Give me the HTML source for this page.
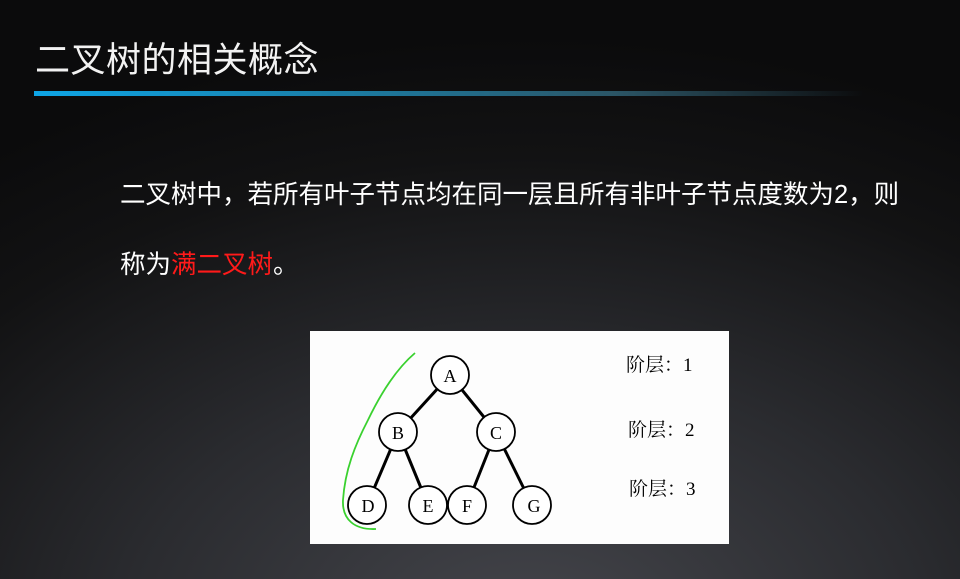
<!DOCTYPE html>
<html><head><meta charset="utf-8"><style>
html,body{margin:0;padding:0}
body{width:960px;height:579px;overflow:hidden;position:relative;font-family:"Liberation Sans","Noto Sans CJK SC",sans-serif;
background:radial-gradient(ellipse 900px 600px at 55% 110%,#45464c 0%,#2a2b2f 45%,#121213 80%,#0b0b0c 100%);}
.t{position:absolute;left:35px;top:32px;font-size:35px;color:#f2f2f2;letter-spacing:0.5px}
.bar{position:absolute;left:34px;top:91px;width:830px;height:5px;background:linear-gradient(90deg,#0ea5e6 0%,#1a7fa8 35%,#2b5566 70%,rgba(40,50,60,0) 100%)}
.p{position:absolute;left:120px;font-size:25.5px;color:#fff}
.box{position:absolute;left:310px;top:331px;width:419px;height:213px;background:#fdfdfd}
</style></head><body>
<div class="t">二叉树的相关概念</div>
<div class="bar"></div>
<div class="p" style="top:174px">二叉树中，若所有叶子节点均在同一层且所有非叶子节点度数为2，则</div>
<div class="p" style="top:244px">称为<span style="color:#ff1a1a">满二叉树</span>。</div>
<div class="box"></div>
<svg style="position:absolute;left:0;top:0" width="960" height="579" font-family="Liberation Serif,Noto Serif CJK SC,serif" font-size="18">
<g stroke="#000" stroke-width="3">
<line x1="450" y1="375" x2="398" y2="432"/><line x1="450" y1="375" x2="496" y2="432"/>
<line x1="398" y1="432" x2="367" y2="505"/><line x1="398" y1="432" x2="428" y2="505"/>
<line x1="496" y1="432" x2="467" y2="505"/><line x1="496" y1="432" x2="532" y2="505"/>
</g>
<g fill="#fff" stroke="#000" stroke-width="1.8">
<circle cx="450" cy="375" r="19"/><circle cx="398" cy="432" r="19"/><circle cx="496" cy="432" r="19"/>
<circle cx="367" cy="505" r="19"/><circle cx="428" cy="505" r="19"/><circle cx="467" cy="505" r="19"/><circle cx="532" cy="505" r="19"/>
</g>
<g text-anchor="middle" fill="#000">
<text x="450" y="382">A</text><text x="398" y="439">B</text><text x="496" y="439">C</text>
<text x="368" y="512">D</text><text x="428" y="512">E</text><text x="467" y="512">F</text><text x="534" y="512">G</text>
</g>
<path d="M415 353 C395 370 380 395 368 420 C355 445 345 470 343 500 C342 520 355 530 376 529" fill="none" stroke="#3ad12f" stroke-width="1.8"/>
<g fill="#000" font-size="19">
<text x="626" y="371">阶层：1</text><text x="628" y="436">阶层：2</text><text x="629" y="495">阶层：3</text>
</g>
</svg>
</body></html>
